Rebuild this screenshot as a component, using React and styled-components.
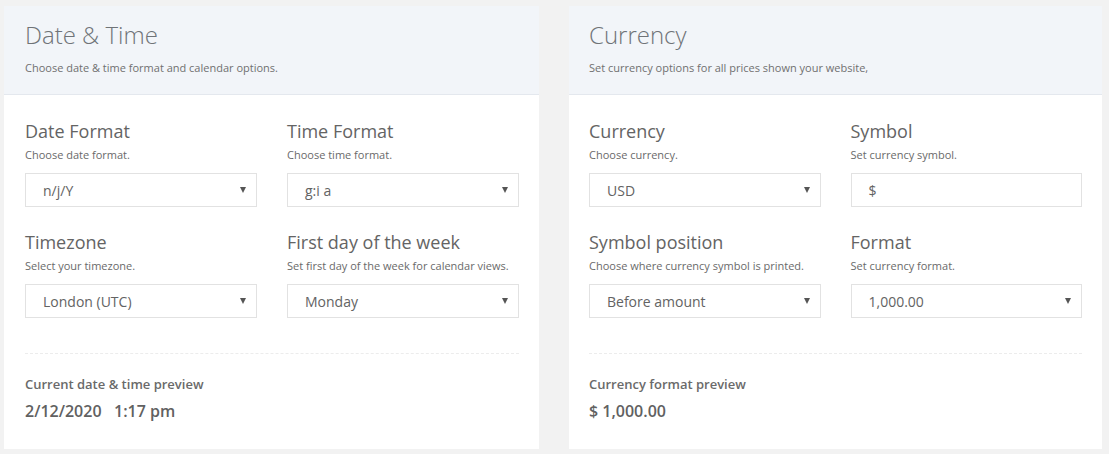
import React from "react";
import styled, { createGlobalStyle } from "styled-components";

const Global = createGlobalStyle`
  html, body { margin: 0; padding: 0; background: #f2f2f2; }
  body { font-family: "Open Sans", "Noto Sans", Arial, sans-serif; }
  * { box-sizing: border-box; }
`;

const Page = styled.div`
  display: grid;
  grid-template-columns: 535px 533px;
  column-gap: 30px;
  padding: 6px 7px 6px 4px;
  align-items: start;
`;

const Card = styled.section`
  background: #fff;
  display: flex;
  flex-direction: column;
`;

const Header = styled.header`
  background: #f2f5f9;
  border-bottom: 1px solid #e4e8ee;
  padding: 13px 20px 18px ${(p) => p.$inset}px;
`;

const Title = styled.h2`
  margin: 0;
  font-size: 24px;
  line-height: 32px;
  font-weight: 300;
  color: #6f7377;
`;

const Subtitle = styled.p`
  margin: 9px 0 0;
  font-size: 11px;
  line-height: 16px;
  color: #707070;
`;

const Body = styled.div`
  padding: 24px 20px 27px ${(p) => p.$inset}px;
`;

const Grid = styled.div`
  display: grid;
  grid-template-columns: 1fr 1fr;
  column-gap: 30px;
  row-gap: 23px;
`;

const Field = styled.div`
  display: flex;
  flex-direction: column;
`;

const Label = styled.label`
  font-size: 18px;
  line-height: 24px;
  color: #646464;
`;

const Desc = styled.span`
  margin-top: 4px;
  font-size: 11px;
  line-height: 16px;
  color: #6a6a6a;
`;

const Control = styled.div`
  margin-top: 10px;
  height: 34px;
  border: 1px solid #e2e2e2;
  background: #fff;
  display: flex;
  align-items: center;
  justify-content: space-between;
  padding: 0 10px 0 17px;
  font-size: 14px;
  color: #636363;
`;

const Arrow = styled.span`
  width: 0;
  height: 0;
  border-left: 3px solid transparent;
  border-right: 3px solid transparent;
  border-top: 6px solid #555;
`;

const Divider = styled.hr`
  margin: 35px 0 0;
  border: 0;
  border-top: 1px dashed #ececec;
`;

const PreviewTitle = styled.div`
  margin-top: 21px;
  font-size: 13px;
  line-height: 18px;
  font-weight: 600;
  color: #6a6a6a;
`;

const PreviewValue = styled.div`
  margin-top: 7px;
  font-size: 16px;
  line-height: 22px;
  font-weight: 600;
  color: #616161;
  white-space: pre;
`;

function FieldBlock({ label, desc, value, select = true }) {
  return (
    <Field>
      <Label>{label}</Label>
      <Desc>{desc}</Desc>
      <Control>
        <span>{value}</span>
        {select && <Arrow />}
      </Control>
    </Field>
  );
}

function Panel({ title, subtitle, fields, previewTitle, previewValue, inset }) {
  return (
    <Card>
      <Header $inset={inset}>
        <Title>{title}</Title>
        <Subtitle>{subtitle}</Subtitle>
      </Header>
      <Body $inset={inset}>
        <Grid>
          {fields.map((f) => (
            <FieldBlock key={f.label} {...f} />
          ))}
        </Grid>
        <Divider />
        <PreviewTitle>{previewTitle}</PreviewTitle>
        <PreviewValue>{previewValue}</PreviewValue>
      </Body>
    </Card>
  );
}

export default function App() {
  return (
    <>
      <Global />
      <Page>
        <Panel
          inset={21}
          title="Date & Time"
          subtitle="Choose date & time format and calendar options."
          fields={[
            { label: "Date Format", desc: "Choose date format.", value: "n/j/Y" },
            { label: "Time Format", desc: "Choose time format.", value: "g:i a" },
            { label: "Timezone", desc: "Select your timezone.", value: "London (UTC)" },
            {
              label: "First day of the week",
              desc: "Set first day of the week for calendar views.",
              value: "Monday",
            },
          ]}
          previewTitle="Current date & time preview"
          previewValue={"2/12/2020   1:17 pm"}
        />
        <Panel
          inset={20}
          title="Currency"
          subtitle="Set currency options for all prices shown your website,"
          fields={[
            { label: "Currency", desc: "Choose currency.", value: "USD" },
            { label: "Symbol", desc: "Set currency symbol.", value: "$", select: false },
            {
              label: "Symbol position",
              desc: "Choose where currency symbol is printed.",
              value: "Before amount",
            },
            { label: "Format", desc: "Set currency format.", value: "1,000.00" },
          ]}
          previewTitle="Currency format preview"
          previewValue="$ 1,000.00"
        />
      </Page>
    </>
  );
}
